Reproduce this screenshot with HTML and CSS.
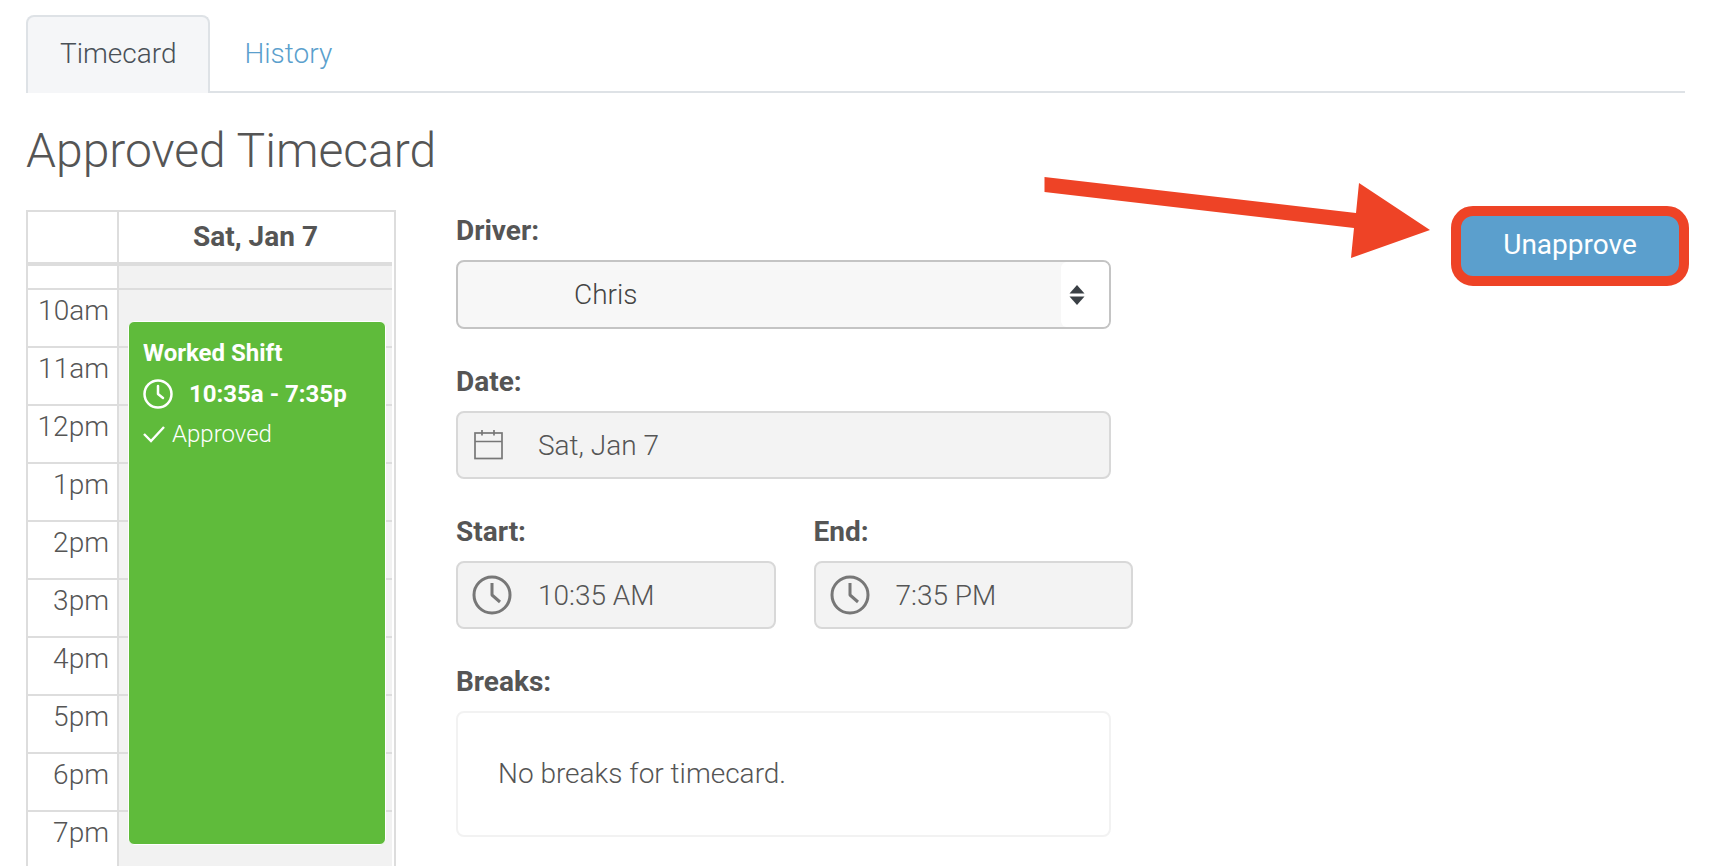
FILE: index.html
```html
<!DOCTYPE html>
<html lang="en">
<head>
    <meta charset="UTF-8">
    <meta name="viewport" content="width=device-width, initial-scale=1.0">
    <title>Approved Timecard</title>
    <link rel="stylesheet" href="styles.css">
</head>
<body>
    <nav class="tabs">
        <a class="tab active" href="#">Timecard</a>
        <a class="tab" href="#">History</a>
    </nav>

    <h1 class="page-title">Approved Timecard</h1>

    <div class="content">
        <div class="calendar">
            <div class="cal-head">
                <div class="cal-corner"></div>
                <div class="cal-day">Sat, Jan 7</div>
            </div>
            <div class="cal-body">
                <div class="hours">
                    <div class="hour-spacer"></div>
                    <div class="hour">10am</div>
                    <div class="hour">11am</div>
                    <div class="hour">12pm</div>
                    <div class="hour">1pm</div>
                    <div class="hour">2pm</div>
                    <div class="hour">3pm</div>
                    <div class="hour">4pm</div>
                    <div class="hour">5pm</div>
                    <div class="hour">6pm</div>
                    <div class="hour">7pm</div>
                </div>
                <div class="day-col">
                    <div class="hour-spacer"></div>
                    <div class="slot"></div>
                    <div class="slot"></div>
                    <div class="slot"></div>
                    <div class="slot"></div>
                    <div class="slot"></div>
                    <div class="slot"></div>
                    <div class="slot"></div>
                    <div class="slot"></div>
                    <div class="slot"></div>
                    <div class="slot"></div>

                    <div class="shift">
                        <div class="shift-title">Worked Shift</div>
                        <div class="shift-time">
                            <svg class="shift-clock" viewBox="0 0 30 30" fill="none" stroke="#fff" stroke-width="2.5">
                                <circle cx="15" cy="15" r="13.5"/>
                                <path d="M15 7v8l5 4" stroke-linecap="round" stroke-linejoin="round"/>
                            </svg>
                            10:35a - 7:35p
                        </div>
                        <div class="shift-status">
                            <svg class="shift-check" viewBox="0 0 22 18" fill="none" stroke="#fff" stroke-width="2.4">
                                <path d="M1 9l7 7L21 2"/>
                            </svg>
                            Approved
                        </div>
                    </div>
                </div>
            </div>
        </div>

        <div class="form">
            <div class="field">
                <label class="field-label">Driver:</label>
                <div class="select">
                    <span class="select-value">Chris</span>
                    <span class="select-arrows">
                        <svg viewBox="0 0 16 20" width="16" height="20" fill="#3a4045">
                            <path d="M8 0l7.5 8.5H.5z"/>
                            <path d="M8 20l7.5-8.5H.5z"/>
                        </svg>
                    </span>
                </div>
            </div>

            <div class="field">
                <label class="field-label">Date:</label>
                <div class="input">
                    <svg class="input-cal" viewBox="0 0 30 30" fill="none" stroke="#777" stroke-width="1.7">
                        <rect x="1" y="3" width="27" height="25.5"/>
                        <path d="M1 11.5h27M8 0v5.5M20 0v5.5"/>
                    </svg>
                    <span>Sat, Jan 7</span>
                </div>
            </div>

            <div class="field-row">
                <div class="field">
                    <label class="field-label">Start:</label>
                    <div class="input">
                        <svg class="input-clock" viewBox="0 0 40 40" fill="none" stroke="#777" stroke-width="3">
                            <circle cx="20" cy="20" r="18"/>
                            <path d="M20 8v12l8 7" stroke-linejoin="round"/>
                        </svg>
                        <span>10:35 AM</span>
                    </div>
                </div>
                <div class="field">
                    <label class="field-label">End:</label>
                    <div class="input">
                        <svg class="input-clock" viewBox="0 0 40 40" fill="none" stroke="#777" stroke-width="3">
                            <circle cx="20" cy="20" r="18"/>
                            <path d="M20 8v12l8 7" stroke-linejoin="round"/>
                        </svg>
                        <span>7:35 PM</span>
                    </div>
                </div>
            </div>

            <div class="field field-last">
                <label class="field-label">Breaks:</label>
                <div class="breaks">No breaks for timecard.</div>
            </div>
        </div>
    </div>

    <!-- annotation drawn over the screenshot -->
    <svg class="arrow" viewBox="0 0 390 90" width="390" height="90">
        <path fill="#ee4326" d="M3.500 6L3.500 21 313 57 310 87 389 59 318 12 315 42z"/>
    </svg>
    <button class="btn-unapprove">Unapprove</button>
</body>
</html>
```

FILE: styles.css
```css
:root {
    --text-color: #555;
    --link-color: #5b9fcd;
    --line-color: #ddd;
    --red-mark: #ee4326;
}

html, body {
    height: 100%;
}

body {
    font-family: 'Roboto', sans-serif;
    font-weight: 300;
    margin: 0;
    padding: 15px 33px 0 26px;
    box-sizing: border-box;
    background: white;
    color: var(--text-color);
    overflow: hidden;
    position: relative;
}

.tabs {
    display: flex;
    height: 78px;
    border-bottom: 2px solid #dee2e6;
    box-sizing: border-box;
}

.tab {
    font-size: 28px;
    text-decoration: none;
    color: var(--link-color);
    padding: 22px 35px 0;
}

.tab.active {
    color: #495057;
    background: #f5f6f8;
    border: 2px solid #dee2e6;
    border-bottom: none;
    border-radius: 8px 8px 0 0;
    height: 78px;
    box-sizing: border-box;
    padding: 20px 31px 0 32px;
}

.page-title {
    font-size: 48px;
    font-weight: 300;
    line-height: 56px;
    margin: 30px 0 0;
}

.content {
    display: flex;
    margin-top: 31px;
}

/* calendar */
.calendar {
    width: 370px;
    flex-shrink: 0;
    border: 2px solid var(--line-color);
    border-bottom: none;
    box-sizing: border-box;
    height: 656px;
    overflow: hidden;
}

.cal-head {
    display: flex;
    height: 54px;
    box-sizing: border-box;
    border-bottom: 4px solid var(--line-color);
    margin-right: 2px;
}

.cal-corner {
    width: 89px;
    border-right: 2px solid var(--line-color);
}

.cal-day {
    flex: 1;
    text-align: center;
    font-size: 28px;
    font-weight: 700;
    line-height: 50px;
}

.cal-body {
    display: flex;
}

.hours {
    width: 89px;
    border-right: 2px solid var(--line-color);
}

.hour-spacer {
    height: 22px;
    border-bottom: 2px solid var(--line-color);
}

.hour {
    height: 56px;
    border-bottom: 2px solid var(--line-color);
    text-align: right;
    padding-right: 8px;
    font-size: 28px;
    line-height: 41px;
}

.day-col {
    flex: 1;
    background: #f2f2f2;
    position: relative;
    margin-right: 2px;
}

.slot {
    height: 56px;
    border-bottom: 2px solid var(--line-color);
}

.shift {
    position: absolute;
    left: 9px;
    right: 6px;
    top: 55px;
    height: 524px;
    box-sizing: border-box;
    background: #5fbb3b;
    border: 1px solid white;
    border-radius: 6px;
    color: white;
    padding: 16px 14px;
}

.shift-title {
    font-size: 24px;
    font-weight: 700;
    line-height: 30px;
}

.shift-time {
    display: flex;
    align-items: center;
    font-size: 24px;
    font-weight: 700;
    line-height: 30px;
    margin-top: 11px;
}

.shift-clock {
    width: 30px;
    height: 30px;
    margin-right: 16px;
}

.shift-status {
    display: flex;
    align-items: center;
    font-size: 24px;
    line-height: 30px;
    margin-top: 10px;
}

.shift-check {
    width: 22px;
    height: 18px;
    margin-right: 7px;
}

/* form */
.form {
    width: 655px;
    margin-left: 60px;
    padding-top: 4px;
    flex-shrink: 0;
}

.field {
    margin-bottom: 36px;
}

.field-last {
    margin-bottom: 0;
}

.field-label {
    display: block;
    font-size: 28px;
    font-weight: 700;
    line-height: 33px;
    margin-bottom: 13px;
}

.select {
    display: flex;
    height: 69px;
    box-sizing: border-box;
    border: 2px solid #c4c4c4;
    border-radius: 8px;
    overflow: hidden;
    background: #f7f7f7;
}

.select-value {
    flex: 1;
    font-size: 28px;
    line-height: 65px;
    padding-left: 116px;
    color: #444;
}

.select-arrows {
    width: 48px;
    display: flex;
    align-items: center;
    padding-left: 8px;
    box-sizing: border-box;
    background: white;
    border-radius: 6px 0 0 6px;
}

.input {
    display: flex;
    align-items: center;
    height: 68px;
    box-sizing: border-box;
    background: #f3f3f3;
    border: 2px solid #d8d8d8;
    border-radius: 8px;
    font-size: 28px;
}

.input-cal {
    width: 30px;
    height: 30px;
    margin: 0 34px 0 16px;
}

.input-clock {
    width: 40px;
    height: 40px;
    margin: 0 26px 0 14px;
}

.field-row {
    display: flex;
    gap: 38px;
    width: 677px;
}

.field-row .field {
    flex: 1;
}

.breaks {
    height: 126px;
    box-sizing: border-box;
    border: 2px solid #f2f2f2;
    border-radius: 8px;
    font-size: 28px;
    line-height: 122px;
    padding-left: 40px;
}

/* annotation */
.arrow {
    position: absolute;
    left: 1041px;
    top: 171px;
}

.btn-unapprove {
    position: absolute;
    left: 1451px;
    top: 206px;
    width: 238px;
    height: 80px;
    box-sizing: border-box;
    background: var(--link-color);
    border: 10px solid var(--red-mark);
    border-radius: 22px;
    color: white;
    font-family: inherit;
    font-size: 28px;
    font-weight: 400;
    padding: 0 0 4px;
}
```
